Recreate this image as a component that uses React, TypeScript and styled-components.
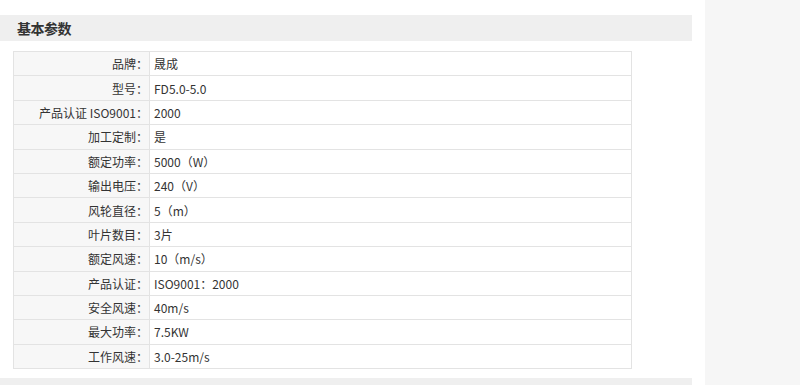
import React from 'react';
import styled, { createGlobalStyle } from 'styled-components';

const GlobalStyle = createGlobalStyle`
  html, body {
    margin: 0;
    padding: 0;
    background: #ffffff;
  }
  body {
    font-family: "Noto Sans CJK SC", "Liberation Sans", sans-serif;
    color: #333333;
  }
`;

const params: [string, string][] = [
  ['品牌：', '晟成'],
  ['型号：', 'FD5.0-5.0'],
  ['产品认证 ISO9001：', '2000'],
  ['加工定制：', '是'],
  ['额定功率：', '5000（W）'],
  ['输出电压：', '240（V）'],
  ['风轮直径：', '5（m）'],
  ['叶片数目：', '3片'],
  ['额定风速：', '10（m/s）'],
  ['产品认证：', 'ISO9001：2000'],
  ['安全风速：', '40m/s'],
  ['最大功率：', '7.5KW'],
  ['工作风速：', '3.0-25m/s'],
];

const Page = styled.div({
  display: 'flex',
  gap: '13px',
  height: '385px',
  overflow: 'hidden',
});

const Main = styled.div({
  width: '692px',
  paddingTop: '15px',
  display: 'flex',
  flexDirection: 'column',
  '& > *': {
    flexShrink: 0,
  },
});

const SideBar = styled.div({
  flex: 1,
  backgroundColor: '#f6f6f6',
});

const SectionHeader = styled.div({
  height: '26px',
  display: 'flex',
  alignItems: 'center',
  paddingLeft: '17px',
  backgroundColor: '#efefef',
});

const SectionTitle = styled.h3({
  margin: 0,
  fontSize: '14px',
  fontWeight: 700,
  color: '#333333',
  letterSpacing: '-0.5px',
});

const ParamTable = styled.table({
  marginTop: '10px',
  marginLeft: '13px',
  width: '619px',
  borderCollapse: 'collapse',
  border: '1px solid #e3e3e3',
  fontSize: '12px',
});

const Row = styled.tr({
  height: '24.4px',
  borderBottom: '1px solid #e3e3e3',
});

const Label = styled.th({
  width: '134px',
  padding: '0 1px 0 0',
  textAlign: 'right',
  fontWeight: 400,
  whiteSpace: 'nowrap',
  backgroundColor: '#f7f7f7',
  borderRight: '1px solid #e3e3e3',
});

const Value = styled.td({
  padding: '0 0 0 4px',
  textAlign: 'left',
  backgroundColor: '#ffffff',
});

const FooterBar = styled.div({
  marginTop: '9px',
  height: '8px',
  backgroundColor: '#efefef',
});

export default function App() {
  return (
    <>
      <GlobalStyle />
      <Page>
        <Main>
          <SectionHeader>
            <SectionTitle>基本参数</SectionTitle>
          </SectionHeader>
          <ParamTable>
            <tbody>
              {params.map(([label, value]) => (
                <Row key={label}>
                  <Label>{label}</Label>
                  <Value>{value}</Value>
                </Row>
              ))}
            </tbody>
          </ParamTable>
          <FooterBar />
        </Main>
        <SideBar />
      </Page>
    </>
  );
}
